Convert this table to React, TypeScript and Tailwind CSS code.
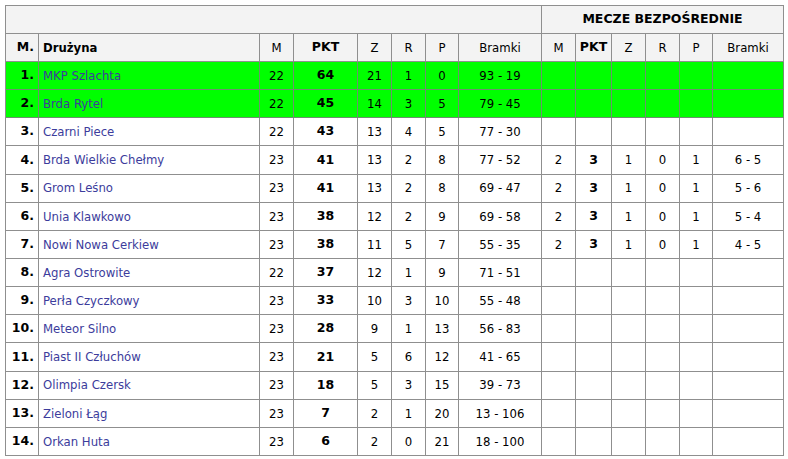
import React from "react";

type Row = {
  pos: number;
  team: string;
  m: string;
  pkt: string;
  z: string;
  r: string;
  p: string;
  b: string;
  green?: boolean;
  mb?: [string, string, string, string, string, string];
};

const rows: Row[] = [
  { pos: 1, team: "MKP Szlachta", m: "22", pkt: "64", z: "21", r: "1", p: "0", b: "93 - 19", green: true },
  { pos: 2, team: "Brda Rytel", m: "22", pkt: "45", z: "14", r: "3", p: "5", b: "79 - 45", green: true },
  { pos: 3, team: "Czarni Piece", m: "22", pkt: "43", z: "13", r: "4", p: "5", b: "77 - 30" },
  { pos: 4, team: "Brda Wielkie Chełmy", m: "23", pkt: "41", z: "13", r: "2", p: "8", b: "77 - 52", mb: ["2", "3", "1", "0", "1", "6 - 5"] },
  { pos: 5, team: "Grom Leśno", m: "23", pkt: "41", z: "13", r: "2", p: "8", b: "69 - 47", mb: ["2", "3", "1", "0", "1", "5 - 6"] },
  { pos: 6, team: "Unia Klawkowo", m: "23", pkt: "38", z: "12", r: "2", p: "9", b: "69 - 58", mb: ["2", "3", "1", "0", "1", "5 - 4"] },
  { pos: 7, team: "Nowi Nowa Cerkiew", m: "23", pkt: "38", z: "11", r: "5", p: "7", b: "55 - 35", mb: ["2", "3", "1", "0", "1", "4 - 5"] },
  { pos: 8, team: "Agra Ostrowite", m: "22", pkt: "37", z: "12", r: "1", p: "9", b: "71 - 51" },
  { pos: 9, team: "Perła Czyczkowy", m: "23", pkt: "33", z: "10", r: "3", p: "10", b: "55 - 48" },
  { pos: 10, team: "Meteor Silno", m: "23", pkt: "28", z: "9", r: "1", p: "13", b: "56 - 83" },
  { pos: 11, team: "Piast II Człuchów", m: "23", pkt: "21", z: "5", r: "6", p: "12", b: "41 - 65" },
  { pos: 12, team: "Olimpia Czersk", m: "23", pkt: "18", z: "5", r: "3", p: "15", b: "39 - 73" },
  { pos: 13, team: "Zieloni Łąg", m: "23", pkt: "7", z: "2", r: "1", p: "20", b: "13 - 106" },
  { pos: 14, team: "Orkan Huta", m: "23", pkt: "6", z: "2", r: "0", p: "21", b: "18 - 100" },
];

const widths = [33, 221, 34, 64, 34, 34, 33, 83, 34, 36, 34, 34, 33, 71];

const bold = "font-bold [font-family:'DejaVu_Sans',sans-serif] text-[12.5px]";
const hd = "border-r border-b border-[#8f8f8f] h-[28px] p-0 text-center align-middle bg-[#f3f3f3]";

export default function App() {
  return (
    <div className="bg-white w-[788px] h-[459px] pt-[5px] pl-[5px] text-[13px] text-black [font-family:'DejaVu_Sans_Condensed','DejaVu_Sans',sans-serif]">
      <table className="border-separate border-spacing-0 border-l border-t border-[#8f8f8f] table-fixed w-[779px]">
        <colgroup>
          {widths.map((w, i) => (
            <col key={i} style={{ width: w }} />
          ))}
        </colgroup>
        <thead>
          <tr>
            <td className={hd} colSpan={8}></td>
            <td className={`${hd} ${bold}`} colSpan={6}>MECZE BEZPOŚREDNIE</td>
          </tr>
          <tr>
            <td className={`${hd} ${bold} text-right pr-[4px]`}>M.</td>
            <td className={`${hd} font-bold text-left pl-[4px]`}>Drużyna</td>
            <td className={hd}>M</td>
            <td className={`${hd} ${bold}`}>PKT</td>
            <td className={hd}>Z</td>
            <td className={hd}>R</td>
            <td className={hd}>P</td>
            <td className={hd}>Bramki</td>
            <td className={hd}>M</td>
            <td className={`${hd} ${bold}`}>PKT</td>
            <td className={hd}>Z</td>
            <td className={hd}>R</td>
            <td className={hd}>P</td>
            <td className={hd}>Bramki</td>
          </tr>
        </thead>
        <tbody>
          {rows.map((r) => {
            const mb = r.mb ?? ["", "", "", "", "", ""];
            const td = `border-r border-b h-[28.15px] p-0 text-center align-middle ${r.green ? "bg-[#00ff00] border-[#6f8f6f]" : "bg-white border-[#8f8f8f]"}`;
            return (
              <tr key={r.pos}>
                <td className={`${td} ${bold} text-right pr-[4px]`}>{r.pos}.</td>
                <td className={`${td} text-left pl-[4px] text-[#3c3c9c]`}>{r.team}</td>
                <td className={td}>{r.m}</td>
                <td className={`${td} ${bold}`}>{r.pkt}</td>
                <td className={td}>{r.z}</td>
                <td className={td}>{r.r}</td>
                <td className={td}>{r.p}</td>
                <td className={td}>{r.b}</td>
                <td className={td}>{mb[0]}</td>
                <td className={`${td} ${bold}`}>{mb[1]}</td>
                <td className={td}>{mb[2]}</td>
                <td className={td}>{mb[3]}</td>
                <td className={td}>{mb[4]}</td>
                <td className={td}>{mb[5]}</td>
              </tr>
            );
          })}
        </tbody>
      </table>
    </div>
  );
}
